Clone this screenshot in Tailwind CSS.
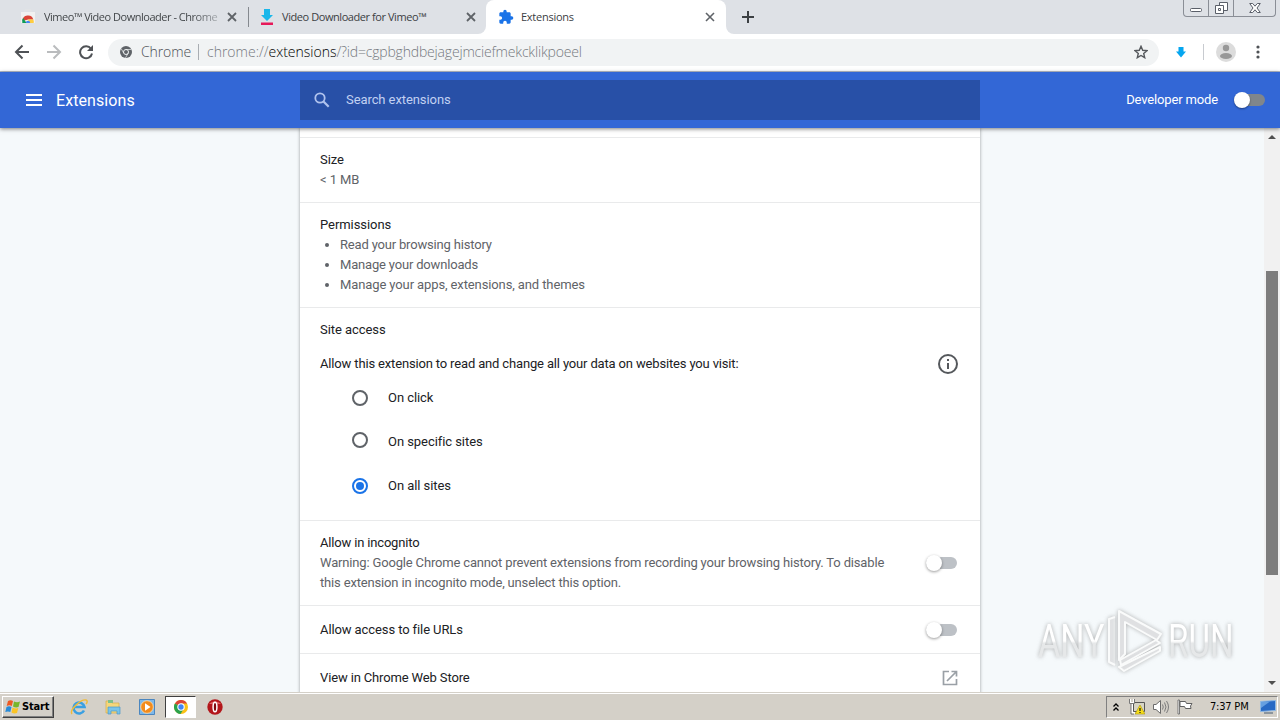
<!DOCTYPE html>
<html lang="en">
<head>
    <meta charset="UTF-8">
    <meta name="viewport" content="width=device-width, initial-scale=1.0">
    <title>Extensions</title>
    <script src="https://cdn.jsdelivr.net/npm/@tailwindcss/browser@4"></script>
</head>
<body class="w-[1280px] h-[720px] overflow-hidden flex flex-col bg-white font-['Roboto','Liberation_Sans',sans-serif] text-[13px] leading-5 text-[#202124]">

    <!-- Tab strip -->
    <div class="h-[34px] shrink-0 bg-[#dee1e6] flex items-start text-[11px] text-[#3c4043] font-['Open_Sans',sans-serif]">
        <div class="w-[248px] h-[34px] flex items-center pl-5 border-r border-transparent">
            <svg class="w-4 h-4 shrink-0" viewBox="0 0 16 16">
                <path d="M1 3h14v11H1z" fill="#f1f1f1"/>
                <path d="M5 3V1h6v2" fill="none" stroke="#e4e4e4"/>
                <path d="M2.500 12a5.500 5.500 0 0 1 10.800-1.500l-5 0z" fill="#db4437"/>
                <path d="M2.300 14a5.500 5.500 0 0 1 .8-5l3.500 5z" fill="#0f9d58"/>
                <path d="M13.300 10.500a5 5 0 0 1 .4 3.500H9l-1-3.500z" fill="#ffcd40"/>
                <path d="M5.800 14a2.200 2.200 0 0 1 4.400 0z" fill="#4285f4"/>
            </svg>
            <span class="ml-2 w-[174px] whitespace-nowrap tracking-[-0.48px] text-transparent bg-clip-text bg-linear-to-r from-[#3c4043] from-85% to-[#a9adb2]">Vimeo™ Video Downloader - Chrome</span>
            <svg class="w-[10px] h-[10px] ml-[9px] shrink-0" viewBox="0 0 10 10"><path d="M1 1l8 8M9 1l-8 8" stroke="#5f6368" stroke-width="1.800"/></svg>
        </div>
        <div class="w-[238px] h-[34px] flex items-center">
            <div class="w-px h-5 bg-[#85898f]"></div>
            <svg class="w-4 h-4 ml-[10px] shrink-0" viewBox="0 0 16 16">
                <path d="M5 0h6v6h3l-6 6-6-6h3z" fill="#1ab7ea"/>
                <path d="M2 13.500h12v2.500H2z" fill="#e6195a"/>
            </svg>
            <span class="ml-[7px] w-[175px] whitespace-nowrap tracking-[-0.43px]">Video Downloader for Vimeo™</span>
            <svg class="w-[10px] h-[10px] ml-[9px] shrink-0" viewBox="0 0 10 10"><path d="M1 1l8 8M9 1l-8 8" stroke="#5f6368" stroke-width="1.800"/></svg>
        </div>
        <div class="w-[240px] h-[34px] bg-white rounded-t-lg flex items-center relative">
            <div class="absolute -left-2 bottom-0 w-2 h-2 bg-white"><div class="w-2 h-2 bg-[#dee1e6] rounded-br-lg"></div></div>
            <div class="absolute -right-2 bottom-0 w-2 h-2 bg-white"><div class="w-2 h-2 bg-[#dee1e6] rounded-bl-lg"></div></div>
            <svg class="w-4 h-4 ml-3 shrink-0" viewBox="0 0 24 24"><path d="M20.500 11H19V7c0-1.100-.9-2-2-2h-4V3.500a2.500 2.500 0 0 0-5 0V5H4c-1.100 0-2 .9-2 2v3.800h1.500a2.700 2.700 0 0 1 0 5.400H2V20c0 1.100.9 2 2 2h3.800v-1.500a2.700 2.700 0 0 1 5.400 0V22H17c1.100 0 2-.9 2-2v-4h1.500a2.500 2.500 0 0 0 0-5z" fill="#1a73e8"/></svg>
            <span class="ml-[7px] w-[175px] whitespace-nowrap tracking-[-0.25px]">Extensions</span>
            <svg class="w-[10px] h-[10px] ml-[9px] shrink-0" viewBox="0 0 10 10"><path d="M1 1l8 8M9 1l-8 8" stroke="#5f6368" stroke-width="1.600"/></svg>
        </div>
        <svg class="w-3 h-3 ml-4 mt-[11px]" viewBox="0 0 12 12"><path d="M6 0v12M0 6h12" stroke="#3c4043" stroke-width="2"/></svg>
        <div class="ml-auto mr-1 w-[93px] h-[17px] flex border border-t-0 border-[#8a8e96] rounded-b">
            <div class="w-[25px] border-r border-[#8a8e96] flex justify-center">
                <svg class="w-3 h-4" viewBox="0 0 12 16"><rect x=".5" y="8.500" width="11" height="3" rx="1" fill="#fff" stroke="#5a5f69"/></svg>
            </div>
            <div class="w-[25px] border-r border-[#8a8e96] flex justify-center">
                <svg class="w-[13px] h-4" viewBox="0 0 13 16"><path d="M4.500 2.500h8v8h-8z" fill="#fff" stroke="#5a5f69"/><path d="M.5 5.500h8v8h-8z" fill="#fff" stroke="#5a5f69"/><path d="M3.500 8.500h2v2h-2z" fill="none" stroke="#5a5f69"/></svg>
            </div>
            <div class="flex-1 flex justify-center">
                <svg class="w-3 h-4" viewBox="0 0 12 16"><path d="M.7 3.500h3L6 6.200l2.300-2.700h3L8 8l3.300 4.500h-3L6 9.800l-2.300 2.700h-3L4 8z" fill="#fff" stroke="#5a5f69"/></svg>
            </div>
        </div>
    </div>

    <!-- Toolbar -->
    <div class="h-[38px] shrink-0 bg-white border-b border-[#b9bfcb] flex items-center pb-px">
        <svg class="w-4 h-4 ml-[14px]" viewBox="0 0 16 16"><path d="M15 8H2M8.500 1.500L2 8l6.500 6.500" fill="none" stroke="#4f5256" stroke-width="2"/></svg>
        <svg class="w-4 h-4 ml-4" viewBox="0 0 16 16"><path d="M1 8h13M7.500 1.500L14 8l-6.500 6.500" fill="none" stroke="#babcbe" stroke-width="2"/></svg>
        <svg class="w-4 h-4 ml-4" viewBox="0 0 16 16"><path d="M13 4.800A6 6 0 1 0 14 9.500" fill="none" stroke="#4f5256" stroke-width="2"/><path d="M15 1v6H9z" fill="#4f5256"/></svg>
        <div class="w-[1051px] h-[27px] ml-[14px] rounded-full bg-[#f1f3f4] flex items-center pl-3 font-['Open_Sans',sans-serif] text-sm font-light">
            <svg class="w-3 h-3 shrink-0" viewBox="0 0 12 12">
                <circle cx="6" cy="6" r="6" fill="#5f6368"/>
                <circle cx="6" cy="6" r="2.500" fill="#5f6368" stroke="#f1f3f4"/>
                <path d="M6 3.500h5.300M3.800 7.200L1.200 2.700M8.200 7.200L5.500 11.800" stroke="#f1f3f4" stroke-width=".7"/>
            </svg>
            <span class="ml-[9px] w-[49px] whitespace-nowrap tracking-[-0.1px] text-[#4b4f54]">Chrome</span>
            <div class="w-px h-4 ml-2 bg-[#a9adb2]"></div>
            <span class="ml-2 whitespace-nowrap text-[#75797e]">chrome://<span class="text-black">extensions</span><span class="tracking-[-0.18px]">/?id=cgpbghdbejagejmciefmekcklikpoeel</span></span>
            <svg class="w-[14px] h-[14px] ml-auto mr-[11px]" viewBox="0 0 14 14"><path d="M7 1.300l1.700 4 4.300.4-3.300 2.800 1 4.200L7 10.500l-3.700 2.200 1-4.200L1 5.700l4.300-.4z" fill="none" stroke="#55585c" stroke-width="1.400"/></svg>
        </div>
        <svg class="w-[10px] h-3 ml-[17px]" viewBox="0 0 10 12"><path d="M2.500 1h5v4.500H10L5 11.500 0 5.500h2.500z" fill="#05a6f0"/></svg>
        <div class="w-px h-4 ml-[17px] bg-[#c8cbd0]"></div>
        <svg class="w-5 h-5 ml-3" viewBox="0 0 20 20"><circle cx="10" cy="10" r="10" fill="#dcdcdc"/><circle cx="10" cy="6" r="3.200" fill="#989898"/><ellipse cx="10" cy="14" rx="6" ry="3" fill="#989898"/></svg>
        <svg class="w-1 h-[14px] ml-5" viewBox="0 0 4 14"><g fill="#4f5256"><circle cx="2" cy="2" r="1.600"/><circle cx="2" cy="7" r="1.600"/><circle cx="2" cy="12" r="1.600"/></g></svg>
    </div>

    <!-- Page header -->
    <header class="relative z-10 h-14 shrink-0 bg-[#3367d6] text-white flex items-center shadow-[0_1px_4px_rgba(0,0,0,0.5)]">
        <div class="w-[300px] flex items-center pl-[26px]">
            <div class="w-4 h-3 flex flex-col justify-between">
                <div class="h-0.5 bg-white"></div>
                <div class="h-0.5 bg-white"></div>
                <div class="h-0.5 bg-white"></div>
            </div>
            <h1 class="ml-[14px] pt-0.5 text-base leading-5 tracking-[0.08px]">Extensions</h1>
        </div>
        <div class="w-[680px] h-10 bg-[#2850a7] flex items-center pl-[14px] text-[#c2d1f2]">
            <svg class="w-4 h-4" viewBox="0 0 16 16"><circle cx="6" cy="6" r="4.700" fill="none" stroke="#b0c3ee" stroke-width="1.800"/><path d="M9.500 9.500l5.200 5.200" stroke="#b0c3ee" stroke-width="2.200"/></svg>
            <span class="ml-4 tracking-[-0.08px]">Search extensions</span>
        </div>
        <div class="flex-1 flex items-center justify-end pr-[15px]">
            <span class="mr-4 tracking-[-0.15px]">Developer mode</span>
            <div class="relative w-[31px] h-4 flex items-center">
                <div class="w-full h-3 rounded-full bg-[#80868b]"></div>
                <div class="absolute left-0 top-0 w-4 h-4 rounded-full bg-white shadow-[0_1px_2px_rgba(0,0,0,0.4)]"></div>
            </div>
        </div>
    </header>

    <!-- Details page -->
    <main class="h-[564px] shrink-0 flex bg-[#f5f9fb] overflow-hidden">
        <div class="flex-1 pl-[300px]">
            <div class="w-[680px] h-[580px] bg-white shadow-[0_0_3px_rgba(60,64,67,0.5)] tracking-[-0.06px]">
                <div class="h-[10px] border-b border-[#e9eaeb]"></div>
                <div class="px-5 py-3 border-b border-[#e9eaeb]">
                    <div>Size</div>
                    <div class="text-[#5f6368] tracking-[-0.1px]">&lt; 1 MB</div>
                </div>
                <div class="px-5 py-3 border-b border-[#e9eaeb]">
                    <div>Permissions</div>
                    <ul class="list-disc pl-5 text-[#5f6368]">
                        <li class="tracking-[-0.18px]">Read your browsing history</li>
                        <li class="tracking-[-0.18px]">Manage your downloads</li>
                        <li class="tracking-[-0.11px]">Manage your apps, extensions, and themes</li>
                    </ul>
                </div>
                <div class="h-[213px] px-5 pt-3 border-b border-[#e9eaeb]">
                    <div>Site access</div>
                    <div class="flex items-center justify-between h-6 mt-3 pr-0.5">
                        <span class="tracking-[-0.155px]">Allow this extension to read and change all your data on websites you visit:</span>
                        <svg class="w-5 h-5" viewBox="0 0 20 20"><circle cx="10" cy="10" r="9" fill="none" stroke="#55585c" stroke-width="2"/><path d="M10 9v6M10 5v2" stroke="#55585c" stroke-width="2"/></svg>
                    </div>
                    <div class="pl-8">
                        <div class="flex items-center h-11">
                            <div class="w-4 h-4 rounded-full border-2 border-[#5f6368]"></div>
                            <span class="ml-5">On click</span>
                        </div>
                        <div class="flex items-center h-11">
                            <div class="w-4 h-4 mb-1 rounded-full border-2 border-[#5f6368]"></div>
                            <span class="ml-5">On specific sites</span>
                        </div>
                        <div class="flex items-center h-11">
                            <div class="w-4 h-4 rounded-full border-2 border-[#1a73e8] flex items-center justify-center"><div class="w-2 h-2 rounded-full bg-[#1a73e8]"></div></div>
                            <span class="ml-5">On all sites</span>
                        </div>
                    </div>
                </div>
                <div class="px-5 py-3 border-b border-[#e9eaeb] flex items-center justify-between">
                    <div class="w-[580px]">
                        <div class="tracking-[-0.17px]">Allow in incognito</div>
                        <div class="text-[#5f6368] whitespace-nowrap tracking-[-0.165px]">Warning: Google Chrome cannot prevent extensions from recording your browsing history. To disable<br>this extension in incognito mode, unselect this option.</div>
                    </div>
                    <div class="relative w-[31px] h-4 mr-[3px] flex items-center">
                        <div class="w-full h-3 rounded-full bg-[#bdc1c6]"></div>
                        <div class="absolute left-0 top-0 w-4 h-4 rounded-full bg-white shadow-[0_1px_3px_rgba(0,0,0,0.4)]"></div>
                    </div>
                </div>
                <div class="h-12 px-5 border-b border-[#e9eaeb] flex items-center justify-between">
                    <span class="tracking-[-0.1px]">Allow access to file URLs</span>
                    <div class="relative w-[31px] h-4 mr-[3px] flex items-center">
                        <div class="w-full h-3 rounded-full bg-[#bdc1c6]"></div>
                        <div class="absolute left-0 top-0 w-4 h-4 rounded-full bg-white shadow-[0_1px_3px_rgba(0,0,0,0.4)]"></div>
                    </div>
                </div>
                <div class="h-12 px-5 flex items-center justify-between">
                    <span class="tracking-[-0.14px]">View in Chrome Web Store</span>
                    <svg class="w-4 h-4 mr-0.5" viewBox="0 0 16 16"><path d="M7 1.500H1.500v13h13V9M9.500 1.500h5v5M14 2L5 11" fill="none" stroke="#9aa0a6" stroke-width="1.700"/></svg>
                </div>
            </div>
        </div>
        <div class="w-4 bg-[#f1f1f1] flex flex-col items-center">
            <svg class="w-2 h-1 mt-[7px]" viewBox="0 0 8 4"><path d="M4 0l4 4H0z" fill="#505050"/></svg>
            <div class="w-3 h-[304px] mt-[132px] bg-[#7d7d7d]"></div>
            <svg class="w-2 h-1 mt-auto mb-[7px]" viewBox="0 0 8 4"><path d="M0 0h8L4 4z" fill="#505050"/></svg>
        </div>
    </main>

    <!-- Watermark -->
    <div class="absolute left-[1038px] top-[608px] w-[196px] h-[66px] flex items-center text-[46px] leading-none drop-shadow-[0_0_2px_rgba(120,120,120,0.6)] font-['Roboto',sans-serif]">
        <div class="w-[66px]"><span class="inline-block whitespace-nowrap origin-left scale-x-[0.74] text-transparent bg-clip-text bg-linear-to-b from-white from-50% to-[#e6e8e9] to-55%">ANY</span></div>
        <svg class="w-[60px] h-[66px]" viewBox="0 0 60 66">
            <g fill="#eceeef" fill-opacity=".7" stroke="#fafbfb" stroke-width="2" stroke-linejoin="round">
                <path d="M11 9L5 11v43l6 3"/>
                <path d="M15 3l42 23-4 6-32-18v32l-6 6z"/>
                <path d="M16 52l36-20 4 3-39 22z"/>
                <path d="M15 59l5 4 36-20v-4z"/>
            </g>
        </svg>
        <div class="ml-1 w-[66px]"><span class="inline-block whitespace-nowrap origin-left scale-x-[0.72] text-transparent bg-clip-text bg-linear-to-b from-white from-50% to-[#e6e8e9] to-55%">RUN</span></div>
    </div>

    <!-- Taskbar -->
    <footer class="h-7 shrink-0 bg-[#d4d0c8] border-t border-[#d4d0c8] flex items-center pl-0.5 relative z-10 shadow-[inset_0_1px_0_#ffffff] text-black">
        <div class="w-[52px] h-[22px] mt-px flex items-center pl-0.5 border border-t-white border-l-white border-r-[#404040] border-b-[#404040] shadow-[inset_-1px_-1px_0_#808080]">
            <svg class="w-4 h-4 shrink-0" viewBox="0 0 16 16"><path d="M3 2q2.500-1.500 5 0L6.800 7Q4.500 5.500 1.700 7z" fill="#ee5922"/><path d="M9 2.500q3 1.500 6 0L13.500 8q-3 1-5.500-.6z" fill="#78b62a"/><path d="M1.500 8q2.500-1.500 5 0l-1.200 5Q3 12 .3 13z" fill="#278bd8"/><path d="M7.600 8.500q3 1.500 5.700.5L12 14q-3 1-5.500-.6z" fill="#fbc424"/></svg>
            <span class="text-[11px] leading-4 font-bold font-['DejaVu_Sans_Condensed','DejaVu_Sans',sans-serif] tracking-[-0.15px] ml-px">Start</span>
        </div>
        <svg class="w-[18px] h-[18px] ml-[16px] mt-px" viewBox="0 0 18 18"><path d="M14 12.500A5.500 5.500 0 1 1 14.500 9H5" fill="none" stroke="#3aa0e2" stroke-width="2.600"/><path d="M2 16C-1 12 11 1 16 2c2 .5 1 3 0 4" fill="none" stroke="#f0bb38" stroke-width="1.400"/></svg>
        <svg class="w-4 h-4 ml-[17px] mt-px" viewBox="0 0 16 16"><path d="M1 2h5l1 2h7v10H1z" fill="#f5d77b" stroke="#d7ac48" stroke-width=".7"/><path d="M3 1h5v3H3z" fill="#7fc08a"/><path d="M3 8h12v7h-3v-3H6v3H3z" fill="#79c4e9" stroke="#4a98c9" stroke-width=".7"/></svg>
        <svg class="w-4 h-4 ml-[18px] mt-px" viewBox="0 0 16 16"><path d="M.5.5h15v15H.5z" fill="#7db8ea" stroke="#4b86bf"/><circle cx="8" cy="8" r="6.300" fill="#f28b1c" stroke="#fce0b2" stroke-width=".8"/><path d="M6 4.300L11.500 8 6 11.700z" fill="#fff"/></svg>
        <div class="w-[31px] h-[22px] ml-[10px] mt-px bg-white border border-t-[#404040] border-l-[#404040] border-r-white border-b-white flex items-center justify-center">
            <svg class="w-[14px] h-[14px]" viewBox="0 0 14 14"><circle cx="7" cy="7" r="7" fill="#fbc116"/><path d="M7 7L.9 3.500A7 7 0 0 1 13.100 3.500H7z" fill="#dc4437"/><path d="M7 7L.9 3.500A7 7 0 0 0 6.500 14L10 8.500z" fill="#2ba24c"/><circle cx="7" cy="7" r="3.200" fill="#4285f4" stroke="#fff" stroke-width="1.100"/></svg>
        </div>
        <svg class="w-4 h-4 ml-[11px] mt-px" viewBox="0 0 16 16"><circle cx="8" cy="8" r="7.700" fill="#b3161b"/><path d="M2 5a7 5 0 0 1 12 0z" fill="#df6262"/><ellipse cx="8" cy="8" rx="1.900" ry="4.800" fill="#7f090d" stroke="#fff" stroke-width="1.500"/></svg>
        <div class="ml-auto mr-0.5 mt-px w-[172px] h-[22px] border border-t-[#808080] border-l-[#808080] border-r-white border-b-white flex items-center pl-[6px]">
            <svg class="w-[6px] h-[9px]" viewBox="0 0 6 9"><path d="M.5 3.500L3 1l2.500 2.500M.5 7.500L3 5l2.500 2.500" fill="none" stroke="#000" stroke-width="1.300"/></svg>
            <svg class="w-4 h-4 ml-[10px]" viewBox="0 0 16 16"><path d="M4.500 3.500h11v9h-11z" fill="#d8d5c5" stroke="#555"/><path d="M1 0v4h4V0M3 4v10h3" fill="none" stroke="#fff" stroke-width="2"/><path d="M.5 0v4.500h5V0M2 5v10h3" fill="none" stroke="#555" stroke-width=".8"/><path d="M11 6l5 9H6z" fill="#f6dd19" stroke="#a99310" stroke-width=".6"/><path d="M11 9v3M11 13v1" stroke="#222" stroke-width="1.300"/></svg>
            <svg class="w-4 h-4 ml-2" viewBox="0 0 16 16"><path d="M.5 5.500H3L7.500 1.500v13L3 10.500H.5z" fill="#fff" stroke="#6b6b6b"/><path d="M9.500 5.500q1.500 2.500 0 5M11.500 3.500q3 4.500 0 9M13.500 2q4 6 0 12" fill="none" stroke="#7c7c7c"/></svg>
            <svg class="w-4 h-4 ml-2" viewBox="0 0 16 16"><path d="M1 1h1.500v14H1z" fill="#fff" stroke="#606060" stroke-width=".8"/><path d="M3 2.500h5.500l1 2H15l-1.500 2.500.5 2.500H8.500l-1-2H3z" fill="#fff" stroke="#606060"/></svg>
            <span class="ml-[17px] w-[39px] text-[11px] leading-4 whitespace-nowrap font-['DejaVu_Sans_Condensed','DejaVu_Sans',sans-serif] tracking-[-0.2px]">7:37 PM</span>
            <svg class="w-4 h-[14px] ml-[11px] shrink-0" viewBox="0 0 16 14"><path d="M.5 1.500L15.500.5v10l-15 1z" fill="#2869c4" stroke="#8eb8e4"/><path d="M1 2l9-.5L1 8z" fill="#669fe0"/><path d="M4 13h9" stroke="#75828f" stroke-width="1.500"/></svg>
        </div>
    </footer>
</body>
</html>
